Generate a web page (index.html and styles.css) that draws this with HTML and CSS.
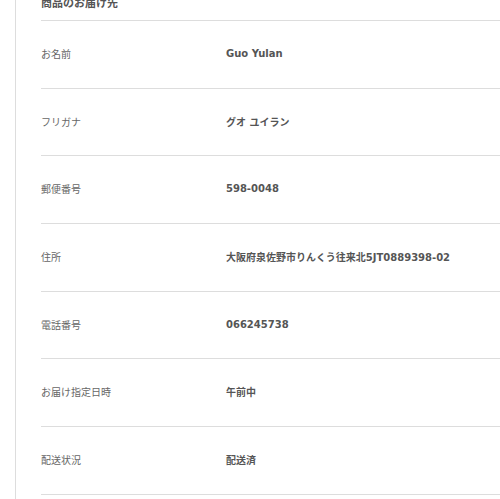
FILE: index.html
```html
<!DOCTYPE html>
<html lang="ja">
<head>
    <meta charset="UTF-8">
    <title>商品のお届け先</title>
    <link rel="stylesheet" href="styles.css">
</head>
<body>
    <div class="panel">
        <h2 class="section-title">商品のお届け先</h2>
        <dl class="detail-list">
            <div class="detail-row">
                <dt>お名前</dt>
                <dd>Guo Yulan</dd>
            </div>
            <div class="detail-row">
                <dt>フリガナ</dt>
                <dd>グオ ユイラン</dd>
            </div>
            <div class="detail-row">
                <dt>郵便番号</dt>
                <dd>598-0048</dd>
            </div>
            <div class="detail-row">
                <dt>住所</dt>
                <dd>大阪府泉佐野市りんくう往来北5JT0889398-02</dd>
            </div>
            <div class="detail-row">
                <dt>電話番号</dt>
                <dd>066245738</dd>
            </div>
            <div class="detail-row">
                <dt>お届け指定日時</dt>
                <dd>午前中</dd>
            </div>
            <div class="detail-row">
                <dt>配送状況</dt>
                <dd>配送済</dd>
            </div>
        </dl>
    </div>
</body>
</html>
```

FILE: styles.css
```css
body {
    margin: 0;
    padding: 0;
    background: #fff;
    font-family: "DejaVu Sans", "Noto Sans CJK JP", sans-serif;
    color: #666;
}
.panel {
    margin-top: -12px;
    margin-left: 15px;
    border-left: 1px solid #ddd;
    padding-left: 25px;
    min-height: 520px;
}
.section-title {
    margin: 0;
    height: 32px;
    line-height: 32px;
    font-size: 11px;
    font-weight: bold;
    color: #555;
}
.detail-list {
    margin: 0;
}
.detail-row {
    display: flex;
    align-items: center;
    height: 64.7px;
    padding-bottom: 2px;
    border-top: 1px solid #ddd;
    font-size: 10px;
}
.detail-row:last-child {
    border-bottom: 1px solid #ddd;
}
.detail-row dt {
    width: 185px;
    flex-shrink: 0;
}
.detail-row dd {
    margin: 0;
    font-weight: bold;
    color: #555;
}
```
